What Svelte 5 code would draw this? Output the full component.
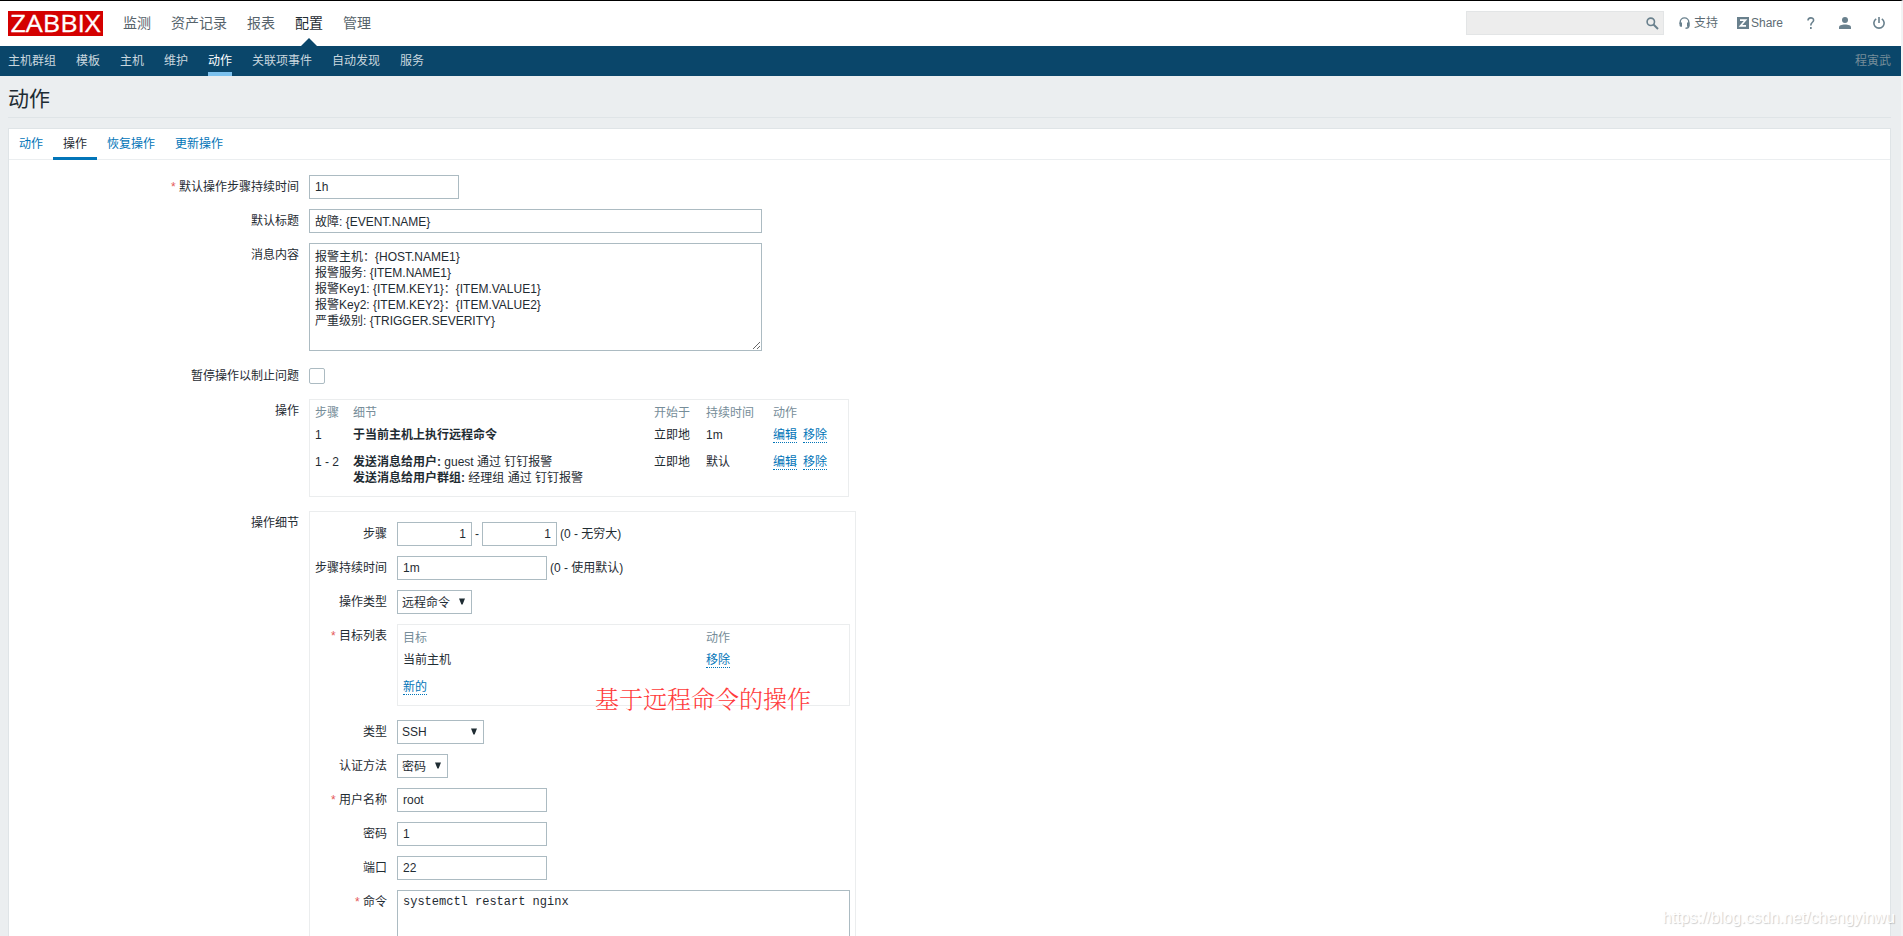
<script lang="ts">
    const mainMenu = ['监测', '资产记录', '报表', '配置', '管理'];
    const subMenu = ['主机群组', '模板', '主机', '维护', '动作', '关联项事件', '自动发现', '服务'];
    const tabs = ['动作', '操作', '恢复操作', '更新操作'];

    let activeTab = $state('操作');
    let search = $state('');
    let stepDuration = $state('1h');
    let subject = $state('故障: {EVENT.NAME}');
    let message = $state([
        '报警主机：{HOST.NAME1}',
        '报警服务: {ITEM.NAME1}',
        '报警Key1: {ITEM.KEY1}：{ITEM.VALUE1}',
        '报警Key2: {ITEM.KEY2}：{ITEM.VALUE2}',
        '严重级别: {TRIGGER.SEVERITY}',
    ].join('\n'));
    let pause = $state(false);

    const operations = [
        {
            steps: '1',
            details: [{ title: '于当前主机上执行远程命令', text: '' }],
            start: '立即地',
            duration: '1m',
        },
        {
            steps: '1 - 2',
            details: [
                { title: '发送消息给用户:', text: 'guest 通过 钉钉报警' },
                { title: '发送消息给用户群组:', text: '经理组 通过 钉钉报警' },
            ],
            start: '立即地',
            duration: '默认',
        },
    ];

    let detail = $state({
        from: '1',
        to: '1',
        duration: '1m',
        username: 'root',
        password: '1',
        port: '22',
        command: 'systemctl restart nginx',
    });
</script>

{#snippet dropdown(text: string, size: string)}
    <span class="select {size}">
        <select><option>{text}</option></select>
        <svg width="6" height="7" viewBox="0 0 6 7"><path d="M0 .5h6L3.6 6.5H2.4z" /></svg>
    </span>
{/snippet}

<div class="page">
    <header>
        <div class="logo">
            <svg width="95" height="25" viewBox="0 0 95 25">
                <text x="2.5" y="21" textLength="90" lengthAdjust="spacingAndGlyphs">ZABBIX</text>
            </svg>
        </div>
        <nav class="main-menu">
            {#each mainMenu as item}
                <a href="#top" class:selected={item === '配置'}>{item}</a>
            {/each}
        </nav>
        <div class="tools">
            <div class="search">
                <input type="text" aria-label="search" bind:value={search}>
                <svg width="13" height="13" viewBox="0 0 13 13">
                    <circle cx="4.8" cy="4.8" r="3.7" fill="none" stroke-width="1.6" />
                    <path d="M7.5 7.5l4.5 4.5" stroke-width="1.9" />
                </svg>
            </div>
            <a href="#top" class="support">
                <svg width="11" height="12" viewBox="0 0 11 12">
                    <path d="M1.2 7V5.2a4.3 4.3 0 0 1 8.6 0V9q0 2.2-3.3 2.2" fill="none" stroke-width="1.4" />
                    <path class="fill" d="M.5 5.5h2.5v4.2H1.6Q.5 9.5.5 8zM8 5.5h2.5v3.2q0 1-1 1H8z" />
                </svg>
                支持
            </a>
            <a href="#top" class="share">
                <svg width="12" height="12" viewBox="0 0 12 12">
                    <path class="fill" d="M0 0h12v12H0z" />
                    <path d="M3 3.2h5.5L3.5 8.8H9" fill="none" class="zed" />
                </svg>
                Share
            </a>
            <a href="#top" class="help" aria-label="help">
                <svg width="8" height="12" viewBox="0 0 8 12">
                    <path d="M1 3.5C1 0 6.6 0 6.6 3.2 6.6 5.3 3.8 5.3 3.8 8.4" fill="none" stroke-width="1.6" />
                    <path class="fill" d="M3 10h1.7v2H3z" />
                </svg>
            </a>
            <a href="#top" class="user" aria-label="profile">
                <svg width="12" height="12" viewBox="0 0 12 12">
                    <circle class="fill" cx="6" cy="3" r="3" />
                    <path class="fill" d="M0 12v-1.6C0 8.6 2.5 7.6 6 7.6s6 1 6 2.8V12z" />
                </svg>
            </a>
            <a href="#top" class="power" aria-label="sign out">
                <svg width="12" height="12" viewBox="0 0 12 12">
                    <path d="M3.2 1.8a5.1 5.1 0 1 0 5.6 0M6 0v6" fill="none" stroke-width="1.6" />
                </svg>
            </a>
        </div>
    </header>

    <nav class="sub-menu">
        {#each subMenu as item}
            <a href="#top" class:selected={item === '动作'}>{item}</a>
        {/each}
        <span class="account">程寅武</span>
    </nav>

    <h1>动作</h1>

    <main>
        <div class="tabs">
            {#each tabs as tab}
                <button type="button" class:active={tab === activeTab} onclick={() => (activeTab = tab)}>{tab}</button>
            {/each}
        </div>

        <div class="form">
            <div class="row">
                <label class="required" for="esc-period">默认操作步骤持续时间</label>
                <input id="esc-period" class="medium" type="text" bind:value={stepDuration}>
            </div>
            <div class="row">
                <label for="subject">默认标题</label>
                <input id="subject" class="wide" type="text" bind:value={subject}>
            </div>
            <div class="row">
                <label for="message">消息内容</label>
                <textarea id="message" class="wide" bind:value={message}></textarea>
            </div>
            <div class="row pause-row">
                <label for="pause">暂停操作以制止问题</label>
                <input id="pause" type="checkbox" bind:checked={pause}>
            </div>

            <div class="row operations-row">
                <span class="label">操作</span>
                <div class="box operations">
                    <div class="line head">
                        <span>步骤</span><span>细节</span><span>开始于</span><span>持续时间</span><span>动作</span>
                    </div>
                    {#each operations as op}
                        <div class="line">
                            <span>{op.steps}</span>
                            <div>
                                {#each op.details as d}
                                    <div><b>{d.title}</b> {d.text}</div>
                                {/each}
                            </div>
                            <span>{op.start}</span>
                            <span>{op.duration}</span>
                            <span class="actions">
                                <button type="button" class="link">编辑</button>
                                <button type="button" class="link">移除</button>
                            </span>
                        </div>
                    {/each}
                </div>
            </div>

            <div class="row details-row">
                <span class="label">操作细节</span>
                <div class="box details">
                    <div class="row">
                        <label for="step-from">步骤</label>
                        <input id="step-from" class="tiny" type="text" bind:value={detail.from}>
                        <span class="dash">-</span>
                        <input class="tiny" type="text" aria-label="step to" bind:value={detail.to}>
                        <span class="hint">(0 - 无穷大)</span>
                    </div>
                    <div class="row">
                        <label for="step-duration">步骤持续时间</label>
                        <input id="step-duration" class="medium" type="text" bind:value={detail.duration}>
                        <span class="hint">(0 - 使用默认)</span>
                    </div>
                    <div class="row">
                        <span class="label">操作类型</span>
                        {@render dropdown('远程命令', 'w75 low')}
                    </div>
                    <div class="row targets-row">
                        <span class="label required">目标列表</span>
                        <div class="box targets">
                            <div class="line head"><span>目标</span><span>动作</span></div>
                            <div class="line">
                                <span>当前主机</span>
                                <span><button type="button" class="link">移除</button></span>
                            </div>
                            <div class="line"><span><button type="button" class="link">新的</button></span></div>
                            <span class="note">基于远程命令的操作</span>
                        </div>
                    </div>
                    <div class="row">
                        <span class="label">类型</span>
                        {@render dropdown('SSH', 'w87')}
                    </div>
                    <div class="row">
                        <span class="label">认证方法</span>
                        {@render dropdown('密码', 'w51 low')}
                    </div>
                    <div class="row">
                        <label class="required" for="username">用户名称</label>
                        <input id="username" class="medium" type="text" bind:value={detail.username}>
                    </div>
                    <div class="row">
                        <label for="password">密码</label>
                        <input id="password" class="medium" type="text" bind:value={detail.password}>
                    </div>
                    <div class="row">
                        <label for="port">端口</label>
                        <input id="port" class="medium" type="text" bind:value={detail.port}>
                    </div>
                    <div class="row">
                        <label class="required" for="command">命令</label>
                        <textarea id="command" class="wide mono" bind:value={detail.command}></textarea>
                    </div>
                </div>
            </div>
        </div>
    </main>
    <span class="watermark">https://blog.csdn.net/chengyinwu</span>
</div>

<style>
    :global(body) {
        overflow: hidden;
    }

    .page {
        position: relative;
        box-sizing: border-box;
        height: 936px;
        overflow: hidden;
        display: flex;
        flex-direction: column;
        border-top: 1px solid #000;
        border-right: 2px solid #f2f3f4;
        background: #ebeef0;
        color: #1f2c33;
        font: 12px/16px "Liberation Sans", "Noto Sans CJK SC", sans-serif;
    }

    a {
        color: inherit;
        text-decoration: none;
    }

    input,
    textarea,
    select,
    button {
        box-sizing: border-box;
        margin: 0;
        font: inherit;
        color: inherit;
    }

    /* Header */
    header {
        flex: none;
        display: flex;
        align-items: flex-start;
        height: 45px;
        padding: 10px 16px 0 8px;
        box-sizing: border-box;
        background: #fff;
    }

    .logo {
        width: 95px;
        height: 25px;
        background: #d40000;
    }

    .logo svg {
        display: block;
        overflow: visible;
    }

    .logo text {
        fill: #fff;
        stroke: #fff;
        stroke-width: 0.3px;
        font-family: "Open Sans", sans-serif;
        font-size: 24px;
    }

    .main-menu {
        display: flex;
        gap: 20px;
        margin-left: 20px;
        font-size: 14px;
        line-height: 24px;
        color: #56636b;
    }

    .main-menu .selected {
        position: relative;
        color: #1f2c33;
    }

    .main-menu .selected::after {
        content: '';
        position: absolute;
        top: 27px;
        left: 6px;
        border: 8px solid transparent;
        border-top: 0;
        border-bottom-color: #0a466a;
    }

    .tools {
        display: flex;
        align-items: center;
        height: 24px;
        margin-left: auto;
        color: #5d6b73;
    }

    .tools svg {
        stroke: #69808d;
        flex: none;
    }

    .tools .fill {
        fill: #69808d;
        stroke: none;
    }

    .tools .zed {
        stroke: #fff;
        stroke-width: 1.7;
    }

    .tools a {
        display: flex;
        align-items: center;
    }

    .search {
        position: relative;
        width: 198px;
        height: 24px;
    }

    .search input[type="text"] {
        display: block;
        width: 100%;
        border: 1px solid #e3e5e6;
        background: #ededed;
    }

    .search svg {
        position: absolute;
        top: 6px;
        right: 5px;
    }

    .support {
        gap: 4px;
        margin-left: 15px;
    }

    .share {
        gap: 2px;
        margin-left: 19px;
    }

    .help {
        margin-left: 24px;
    }

    .user {
        margin-left: 24px;
    }

    .power {
        margin-left: 22px;
    }

    .sub-menu {
        flex: none;
        display: flex;
        gap: 20px;
        height: 30px;
        padding: 0 10px 0 8px;
        background: #0a466a;
        color: #c9d7df;
        line-height: 31px;
    }

    .sub-menu a {
        box-sizing: border-box;
        height: 30px;
    }

    .sub-menu .selected {
        border-bottom: 4px solid #7cc1ee;
        color: #fff;
    }

    .account {
        margin-left: auto;
        color: #768d99;
    }

    h1 {
        flex: none;
        box-sizing: border-box;
        height: 42px;
        margin: 0 10px 10px 8px;
        border-bottom: 1px solid #dfe4e7;
        font-size: 21px;
        font-weight: 400;
        line-height: 45px;
    }

    main {
        flex: 1;
        margin: 0 10px 0 8px;
        border: 1px solid #dfe4e7;
        border-bottom: 0;
        background: #fff;
        min-height: 0;
    }

    /* Tabs */
    .tabs {
        display: flex;
        height: 30px;
        border-bottom: 1px solid #ebeef0;
    }

    .tabs button {
        height: 31px;
        padding: 1px 10px 0;
        border: 0;
        border-bottom: 3px solid transparent;
        background: none;
        color: #0275b8;
    }

    .tabs .active {
        border-bottom-color: #0275b8;
        color: #1f2c33;
    }

    /* Form */
    .form {
        padding-top: 15px;
    }

    .row {
        display: flex;
        align-items: flex-start;
        margin-bottom: 10px;
    }

    label,
    .label {
        flex: none;
        width: 290px;
        margin: 0 10px -1px 0;
        line-height: 25px;
        text-align: right;
    }

    .required::before {
        content: '* ';
        color: #e45959;
    }

    input[type="text"],
    textarea,
    select {
        height: 24px;
        padding: 0 5px;
        border: 1px solid #acbbc2;
        border-radius: 0;
        background: #fff;
        outline: none;
    }

    .row .medium {
        width: 150px;
    }

    .row .wide {
        width: 453px;
    }

    .row .tiny {
        width: 75px;
        text-align: right;
    }

    .row textarea {
        height: 108px;
        padding: 5px;
        line-height: 16px;
    }

    .row .mono {
        height: 160px;
        padding-top: 3px;
        font-family: "Liberation Mono", monospace;
    }

    #subject {
        padding-bottom: 2px;
    }

    input[type="checkbox"] {
        appearance: none;
        width: 16px;
        height: 16px;
        margin-top: 4px;
        border: 1px solid #acbbc2;
        border-radius: 2px;
        background: #fff;
    }

    .pause-row {
        padding-top: 3px;
        margin-bottom: 11px;
    }

    .dash {
        width: 10px;
        line-height: 24px;
        text-align: center;
    }

    .hint {
        margin-left: 3px;
        line-height: 24px;
    }

    .box {
        box-sizing: border-box;
        border: 1px solid #ebedee;
    }

    .line {
        display: grid;
    }

    .head {
        color: #768d99;
    }

    .operations-row {
        margin-bottom: 14px;
    }

    .operations {
        width: 540px;
        height: 98px;
        padding: 5px;
    }

    .operations .line {
        grid-template-columns: 38px 301px 52px 67px auto;
        margin-bottom: 11px;
    }

    .operations .head,
    .targets .head {
        margin-bottom: 6px;
    }

    .actions {
        display: flex;
        gap: 6px;
    }

    .link {
        height: 16px;
        padding: 0;
        border: 0;
        border-bottom: 1px dotted #0275b8;
        background: none;
        color: #0275b8;
        line-height: 16px;
        vertical-align: top;
    }

    .details {
        width: 547px;
        height: 600px;
        padding-top: 10px;
    }

    .details label,
    .details .label {
        width: 77px;
    }

    .targets {
        position: relative;
        width: 453px;
        height: 82px;
        padding: 5px;
    }

    .targets .line {
        grid-template-columns: 303px auto;
        margin-bottom: 11px;
    }

    .targets .head {
        margin-bottom: 6px;
    }

    .details .targets-row {
        margin-bottom: 14px;
    }

    .note {
        position: absolute;
        top: 58px;
        left: 197px;
        color: #ff3b3b;
        font-family: "Noto Serif CJK SC", "Noto Sans CJK SC", serif;
        font-size: 24px;
        font-weight: 300;
        line-height: 30px;
        white-space: nowrap;
    }

    .select {
        position: relative;
        height: 24px;
    }

    .select select {
        appearance: none;
        width: 100%;
        padding: 0 4px;
    }

    .low select {
        padding-top: 2px;
    }

    .select svg {
        position: absolute;
        top: 8px;
        right: 7px;
        fill: #1f2c33;
        pointer-events: none;
    }

    .w75 {
        width: 75px;
    }

    .w87 {
        width: 87px;
    }

    .w51 {
        width: 51px;
    }

    .watermark {
        position: absolute;
        right: 6px;
        bottom: 8px;
        color: #fff;
        font-size: 16px;
        line-height: 20px;
        text-shadow: 1px 1px 1px rgba(0, 0, 0, 0.2);
    }
</style>
